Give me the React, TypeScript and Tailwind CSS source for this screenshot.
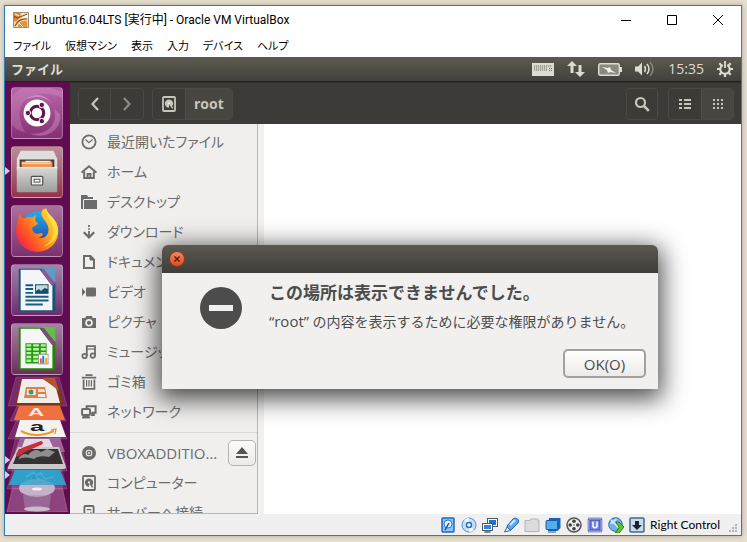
import type { ReactNode } from 'react';

const menus = ['ファイル', '仮想マシン', '表示', '入力', 'デバイス', 'ヘルプ'];

const svgProps = {
  width: 16,
  height: 16,
  viewBox: '0 0 16 16',
  fill: 'none',
  stroke: 'currentColor',
  strokeWidth: 1.8,
};

const DiskIcon = () => (
  <svg {...svgProps}>
    <rect x="2" y="1" width="12" height="14" rx="1" />
    <path d="M8 11.8A4.2 4.2 0 1 1 12.2 7.6C12.2 9 11.2 10.2 10.2 10.8L8 8z" fill="currentColor" stroke="none" />
    <circle cx="8" cy="7.4" r="1.1" fill="#f0efee" stroke="none" />
    <path d="M9 8.6l2.8 3.8" strokeWidth="1.5" />
  </svg>
);

const places: { label: string; icon: ReactNode }[] = [
  {
    label: '最近開いたファイル',
    icon: (
      <svg {...svgProps}>
        <circle cx="8" cy="8" r="6.6" />
        <path d="M4.5 5.5L7.8 8.6L11.5 5.5" strokeWidth="1.2" />
      </svg>
    ),
  },
  {
    label: 'ホーム',
    icon: (
      <svg {...svgProps} strokeWidth="2">
        <path d="M.6 8.6L8 2.2l7.4 6.4" />
        <path d="M3.2 7.5v6.4h9.6V7.5" />
        <path d="M6.6 14v-4h2.8v4" />
      </svg>
    ),
  },
  {
    label: 'デスクトップ',
    icon: (
      <svg {...svgProps} fill="currentColor" stroke="none">
        <path d="M0 1h6l1 2h5v2H3L2 6v9H0z" />
        <path d="M3 6h13v9H3z" />
      </svg>
    ),
  },
  {
    label: 'ダウンロード',
    icon: (
      <svg {...svgProps}>
        <path d="M8 1v2M8 4.2v1.6M8 7v6" />
        <path d="M2.8 8.2L8 13.4l5.2-5.2" strokeWidth="2.2" />
      </svg>
    ),
  },
  {
    label: 'ドキュメント',
    icon: (
      <svg {...svgProps} strokeWidth="2">
        <path d="M3 1.9h6.5L13 5.6v8.5H3z" />
        <path d="M9 2v4h4z" fill="currentColor" strokeWidth="1" />
      </svg>
    ),
  },
  {
    label: 'ビデオ',
    icon: (
      <svg {...svgProps} fill="currentColor" stroke="none">
        <path d="M1 4l3.5 4L1 12z" />
        <rect x="5" y="3.5" width="10" height="9" rx="1" />
      </svg>
    ),
  },
  {
    label: 'ピクチャ',
    icon: (
      <svg {...svgProps} fill="currentColor" stroke="none">
        <path d="M5 2h6l.6 2H15v10H1V4h3.4z" />
        <circle cx="8" cy="8.8" r="3.8" fill="#f0efee" />
        <circle cx="8" cy="8.8" r="2.1" />
      </svg>
    ),
  },
  {
    label: 'ミュージック',
    icon: (
      <svg {...svgProps}>
        <path d="M5.8 12V2.2h8.2v9.2" />
        <path d="M5.8 5H14" strokeWidth="1.2" />
        <circle cx="3.6" cy="12" r="2.2" />
        <circle cx="11.8" cy="11.6" r="2.2" />
      </svg>
    ),
  },
  {
    label: 'ゴミ箱',
    icon: (
      <svg {...svgProps}>
        <path d="M.8 3.6h14.4M4.5 1.2h7" />
        <path d="M2.6 5.4v9.4h10.8V5.4" />
        <path d="M5.6 6v6.5M8 6v6.5M10.4 6v6.5" strokeWidth="1.2" />
      </svg>
    ),
  },
  {
    label: 'ネットワーク',
    icon: (
      <svg {...svgProps} strokeWidth="2">
        <rect x="1" y="5" width="8" height="6" rx="1" />
        <path d="M5.6 4.5V2.3h9v6.5h-4.2" />
        <path d="M1 14h8l-2-3H3z" fill="currentColor" strokeWidth="0.8" />
        <path d="M10 12h4l-.6-3h-3z" fill="currentColor" stroke="none" />
      </svg>
    ),
  },
];

const devices: { label: string; icon: ReactNode; eject?: boolean }[] = [
  {
    label: 'VBOXADDITIO…',
    eject: true,
    icon: (
      <svg {...svgProps}>
        <circle cx="8" cy="8" r="7" fill="currentColor" stroke="none" />
        <circle cx="8" cy="8" r="2.8" stroke="#f0efee" strokeWidth="1.1" />
        <circle cx="8" cy="8" r="1" fill="#f0efee" stroke="none" />
      </svg>
    ),
  },
  { label: 'コンピューター', icon: <DiskIcon /> },
  {
    label: 'サーバーへ接続',
    icon: (
      <svg {...svgProps}>
        <rect x="3.4" y="1" width="9.2" height="14" rx="1" />
        <path d="M5.8 4.6h4.4M9.4 7.5h1.2" strokeWidth="1.4" />
      </svg>
    ),
  },
];

const launchers: { name: string; tile: string; running?: boolean; icon: ReactNode }[] = [
  {
    name: 'Ubuntu',
    tile: 'bg-linear-to-b from-[#b868a8] to-[#852f75]',
    icon: (
      <svg viewBox="0 0 52 52" className="size-full" fill="none">
        <path d="M8 30C6 10 28 0 52 10V4L40 0H10L0 8v30q3 6 14 8Q9 40 8 30z" fill="#d79acb" opacity=".3" />
        <path d="M44 22c4 16-8 28-26 25 18 8 34-4 32-20z" fill="#dba0d0" opacity=".4" />
        <path d="M14 12C26 2 42 8 46 26 44 12 30 5 14 12z" fill="#e6b8dd" opacity=".5" />
        <circle cx="26" cy="26" r="14" fill="#fff" />
        <circle cx="26" cy="26" r="7" stroke="#5c1650" strokeWidth="3.2" />
        <path d="M20 26h-5M29 20.800l3-5M29 31.200l3 5" stroke="#fff" strokeWidth="1.4" />
        <g fill="#5c1650" stroke="#fff" strokeWidth="1">
          <circle cx="16.5" cy="26" r="2.8" />
          <circle cx="31" cy="17.6" r="2.8" />
          <circle cx="31" cy="34.4" r="2.8" />
        </g>
      </svg>
    ),
  },
  {
    name: 'Files',
    tile: 'bg-linear-to-b from-[#b98d9b] to-[#92324b]',
    running: true,
    icon: (
      <svg viewBox="0 0 52 52" className="size-full">
        <defs>
          <linearGradient id="cabinet" x1="0" y1="0" x2="0" y2="1">
            <stop offset="0" stopColor="#d9d9d7" />
            <stop offset="1" stopColor="#9c9c9a" />
          </linearGradient>
        </defs>
        <path d="M9 4h34l4 8v12H5V12z" fill="#dededc" />
        <path d="M8 13h36v9H8z" fill="#4a3a30" />
        <path d="M10 15h32v6H10z" fill="#e8985a" />
        <path d="M10 17h30" stroke="#f7d6a8" strokeWidth="1.6" />
        <path d="M14 15h26" stroke="#f4ead8" strokeWidth="1.4" />
        <path d="M5 21h42v25q0 1-1 1H6q-1 0-1-1z" fill="url(#cabinet)" />
        <path d="M5 21.5h42" stroke="#f3f3f1" />
        <rect x="20" y="30.500" width="12" height="9" rx="1" fill="#eee" stroke="#4c4c4c" strokeWidth="1.2" />
        <rect x="23" y="33.500" width="6" height="3" fill="#fff" stroke="#4c4c4c" />
      </svg>
    ),
  },
  {
    name: 'Firefox',
    tile: 'bg-linear-to-b from-[#a9719d] to-[#7b3270]',
    icon: (
      <svg viewBox="0 0 52 52" className="size-full">
        <defs>
          <linearGradient id="fox" x1="1" y1="0" x2="0" y2="0.7">
            <stop offset="0" stopColor="#fff04a" />
            <stop offset=".4" stopColor="#ffb01f" />
            <stop offset=".75" stopColor="#ff5a22" />
            <stop offset="1" stopColor="#f0264c" />
          </linearGradient>
          <linearGradient id="globe" x1="0" y1="0" x2="0" y2="1">
            <stop offset="0" stopColor="#1aaef0" />
            <stop offset="1" stopColor="#273a9a" />
          </linearGradient>
        </defs>
        <circle cx="27" cy="24" r="18" fill="url(#globe)" />
        <path
          d="M9 8C9 12 11 13 13 13C16 11 19 11 21 12L25 9C24 13 23 15 27 18C27 20 22 21 21 23C21 28 25 30 30 28C34 28 32 32 27 33C36 35 40 27 37 20C34 13 29 12 31 5C33 3 35 2 36 3C36 8 42 10 46 17C51 28 47 40 37 45C26 51 11 46 6 35C3 27 4 20 6 17C6 13 7 10 9 8z"
          fill="url(#fox)"
        />
        <path d="M36 3c-1 8 6 12 7 20c1 10-4 16-10 19c10-2 16-11 14-21C45 12 37 9 36 3z" fill="#ffe34a" opacity=".8" />
      </svg>
    ),
  },
  {
    name: 'Writer',
    tile: 'bg-linear-to-b from-[#a283ac] to-[#6c2e6c]',
    icon: (
      <svg viewBox="0 0 52 52" className="size-full">
        <path d="M27 3h18v17z" fill="#5f9cc2" />
        <path d="M7 4h24l14 15v29H7z" fill="#135577" />
        <path d="M9 5h20l13 17v25H9z" fill="#f4f5f6" />
        <path d="M29 5l13 17 3-3L33 4z" fill="#8b5a94" />
        <path d="M14 21h8M14 25h8M14 29h8M14 33h24M14 37h24M14 41h18" stroke="#155e86" strokeWidth="2" />
        <rect x="24" y="20" width="14" height="10" fill="#1b4d68" />
        <path d="M25 21h12v4l-3-1-4 3-2-2-3 2z" fill="#bfdcea" />
        <circle cx="34" cy="22.500" r="1.500" fill="#f4cf4b" />
      </svg>
    ),
  },
  {
    name: 'Calc',
    tile: 'bg-linear-to-b from-[#a583a3] to-[#6c2e5c]',
    icon: (
      <svg viewBox="0 0 52 52" className="size-full">
        <path d="M27 3h18v17z" fill="#63bd49" />
        <path d="M7 4h24l14 15v29H7z" fill="#23810f" />
        <path d="M9 5h20l13 17v24H9z" fill="#f6f7f5" />
        <path d="M29 5l13 17 3-3L33 4z" fill="#7d4d78" />
        <path d="M14 20h22v21H14z" fill="#239a17" />
        <path
          d="M15 21h5v2.500h-5zM22 21h6v2.500h-6zM30 21h5v2.500h-5zM15 25h5v2.500h-5zM22 25h6v2.500h-6zM30 25h5v2.500h-5zM15 29h5v2.500h-5zM22 29h6v2.500h-6zM30 29h5v2.500h-5zM15 33h5v2.500h-5zM22 33h6v2.500h-6zM15 37h5v2.500h-5zM22 37h6v2.500h-6z"
          fill="#b9f59e"
        />
        <rect x="27.500" y="31.500" width="10" height="10" fill="#fff" stroke="#999" />
        <path d="M29 36h2v5h-2z" fill="#e8552b" />
        <path d="M31.500 33h2v8h-2z" fill="#2f77c8" />
        <path d="M34.500 35h2v6h-2z" fill="#f0a020" />
      </svg>
    ),
  },
];

// Icons that do not fit are folded into a slanted pile at the foot of the launcher.
const FoldedLaunchers = () => (
  <svg viewBox="0 0 65 137" className="w-full shrink-0" aria-hidden="true">
    <g fill="#d49ac6" fillOpacity=".22" stroke="#c68cba" strokeOpacity=".35" strokeWidth=".7">
      <path d="M11 2h43l8 29H3z" />
      <path d="M13 29h40l8 17H5z" />
      <path d="M12 44h42l8 20H3z" />
      <path d="M12 58h42l8 38H2z" />
      <path d="M11 84h43l8 30H2z" />
      <path d="M10 98h45l7 39H2z" />
      <path d="M8 113h49l6 24H2z" />
    </g>
    <path d="M16 4h27l13 11 2 15H10z" fill="#7f3715" />
    <path d="M17 4h21l13 9 4 15H12z" fill="#f1eee9" />
    <path d="M38 3l12 0 4 13z" fill="#b3552f" />
    <path d="M21 12h19l2 11H19z" fill="#e77a48" />
    <path d="M22 14h9l-.5 6h-9zM33 14h6l1 3h-7zM33 19h7l.5 3H33z" fill="#f7eadf" />
    <circle cx="26" cy="17" r="2.500" fill="#3f9b63" />
    <path d="M14 31h41l5 14H9z" fill="#ee7140" />
    <g transform="translate(31 41) scale(1.500 .75)">
      <text textAnchor="middle" fontSize="15" fontWeight="bold" fill="#fbe9e0" fontFamily="Liberation Sans, sans-serif">A</text>
    </g>
    <path d="M15 45h40l6 17H10z" fill="#f4f2f2" />
    <g transform="translate(32 56) scale(1.500 .75)">
      <text textAnchor="middle" fontSize="17" fontWeight="bold" fill="#222" fontFamily="Liberation Sans, sans-serif">a</text>
    </g>
    <path d="M16 56q15 8 33 0" fill="none" stroke="#f39a1e" strokeWidth="2" />
    <path d="M46 55l5-1-1 5" fill="none" stroke="#f39a1e" strokeWidth="1.300" />
    <path d="M15 63h40l5 14H10z" fill="#a878a6" opacity=".75" />
    <path d="M20 64h24l4 8H17z" fill="#f1ecf0" opacity=".85" />
    <path d="M13 72h41l7 20q0 2-2 2H4q-2 0-1-2z" fill="#cbc8ca" />
    <path d="M14 74h39l5 15H8z" fill="#333334" />
    <path d="M13 84q5-7 10-4q7-8 13-3l6-3 8 3-6 5q-10-2-15 2-8-3-16 0z" fill="#8e8e90" />
    <path d="M11 80q1-6 11-9l14-5q4 1 0 4l-14 6-10 6z" fill="#c72f3b" />
    <path d="M10 95h45l6 15H4z" fill="#329fc8" />
    <path d="M21 102l8-5 1 4 6-3 4 6 8-2M24 106l8-3 6 3" fill="none" stroke="#8bd7ef" strokeWidth="1.500" />
    <path d="M29 99l3 6-5-1z" fill="#1a7098" />
    <ellipse cx="32" cy="113" rx="18" ry="9" fill="#cfc6d6" opacity=".85" />
    <path d="M4 110L10 95h45l6 15z" fill="#329fc8" opacity=".75" />
    <ellipse cx="32" cy="114" rx="5" ry="1.500" fill="#f1ecf3" />
    <path d="M18 120h28l-2 14H20z" fill="#a68eaf" opacity=".5" />
    <ellipse cx="32" cy="134" rx="13" ry="2.500" fill="#c9bccc" />
    <path d="M0 81l5 4-5 4zM0 96l5 4-5 4z" fill="#e2c8e4" />
  </svg>
);

const blue = '#1769c4';

const statusIcons: { name: string; icon: ReactNode }[] = [
  {
    name: 'ハードディスク',
    icon: (
      <>
        <rect x="2" y="1" width="12" height="14" rx="1" fill="#8cc3f2" stroke={blue} strokeWidth="1.500" />
        <circle cx="8" cy="7" r="4" fill="#e9f6ff" stroke="#2b79c9" />
        <path d="M9 6l-4 7" stroke="#12509c" strokeWidth="1.500" />
      </>
    ),
  },
  {
    name: '光学ドライブ',
    icon: (
      <>
        <circle cx="8" cy="8" r="7" fill="#c6e0f8" stroke="#4f8cc9" />
        <path d="M8 8L3 3a7 7 0 0 1 5-2zM8 8l5 5a7 7 0 0 1-5 2z" fill="#f2faff" />
        <circle cx="8" cy="8" r="2.500" fill="#fff" stroke="#2370c0" strokeWidth="1.500" />
      </>
    ),
  },
  {
    name: 'ネットワークアダプター',
    icon: (
      <>
        <rect x="5.500" y="1.500" width="10" height="8" fill="#fff" stroke="#4c5968" />
        <path d="M7 3h7v5H7z" fill="#1f6fd0" />
        <rect x=".5" y="6.500" width="10" height="7" fill="#fff" stroke="#4c5968" />
        <path d="M2 8h7v4H2z" fill="#2f86e0" />
        <path d="M2.500 15h6" stroke="#596270" strokeWidth="1.500" />
      </>
    ),
  },
  {
    name: 'USB',
    icon: (
      <>
        <path d="M4 9l6-7q2-2 4.500 0t.5 4l-7 7q-3 1-4-4z" fill="#5aa8ee" stroke="#2565ad" />
        <path d="M4 10l3.500 3.500L1.500 15z" fill="#dbeafa" stroke="#406a98" />
        <path d="M7 8l5-5" stroke="#d3ebff" strokeWidth="2" />
      </>
    ),
  },
  {
    name: '共有フォルダー',
    icon: <path d="M1 14.500v-11h5l1-1.500h7v1.500h1v11z" fill="#dcdcdc" stroke="#b5b5b5" />,
  },
  {
    name: 'ディスプレイ',
    icon: (
      <>
        <path d="M4 1h11.500v10l-3 3H3z" fill="#1764b7" />
        <rect x="1" y="3.500" width="11.500" height="9" rx="1" fill="#54abef" stroke="#1c5ba4" />
        <path d="M3 15h8" stroke="#7c8896" strokeWidth="1.500" />
      </>
    ),
  },
  {
    name: 'ビデオキャプチャ',
    icon: (
      <>
        <circle cx="8" cy="8" r="7" fill="#eee" stroke="#555" strokeWidth="1.500" />
        <g fill="#3f3f3f">
          <circle cx="8" cy="4.200" r="1.800" />
          <circle cx="8" cy="11.800" r="1.800" />
          <circle cx="4.200" cy="8" r="1.800" />
          <circle cx="11.800" cy="8" r="1.800" />
          <circle cx="8" cy="8" r=".7" />
        </g>
      </>
    ),
  },
  {
    name: '仮想化支援機能',
    icon: (
      <>
        <rect x="1.500" y="1.500" width="13" height="13" fill="none" stroke="#3842ae" strokeWidth="2" strokeDasharray="1 1" />
        <rect x="3" y="3" width="10" height="10" fill="#7187e8" stroke="#3444b4" />
        <path d="M6 4.500v5q2 2.500 4 0v-5" fill="none" stroke="#fff" strokeWidth="1.500" />
      </>
    ),
  },
  {
    name: 'マウス統合',
    icon: (
      <>
        <circle cx="7.500" cy="7.500" r="6.800" fill="#6eb2ea" stroke="#2d6fae" />
        <path d="M3 3l8 8M2.500 7l6-5" stroke="#e3f3ff" strokeWidth="1.500" />
        <path d="M8 5h3l5 5-5 6H7l4-5.500z" fill="#62c32f" stroke="#2f7d18" />
      </>
    ),
  },
  {
    name: 'キーボード',
    icon: (
      <>
        <rect x="1" y="1" width="14" height="14" rx="1" fill="#c9dcec" stroke="#41678b" strokeWidth="1.500" />
        <path d="M6 4h4v4h3l-5 5-5-5h3z" fill="#1d2229" />
      </>
    ),
  },
];

function TitleBar() {
  return (
    <header className="flex h-7 shrink-0 items-center bg-white pl-2 text-black">
      <svg width="16" height="16" viewBox="0 0 16 16">
        <rect width="16" height="16" fill="#f3d8ad" />
        <path d="M0 0h8l-1 5-3 4-4 1z" fill="#e08a35" />
        <path d="M9 1h6v5l-6 3z" fill="#fbf2de" />
        <path d="M1 4q3 3 6 1l7-3M2 14Q6 6 14 7" fill="none" stroke="#8d4b22" strokeWidth="1.200" />
        <path d="M5 14q2-6 9-5v6H5z" fill="#ea9333" />
        <path d="M2 2l4 2M6 11l4 4" stroke="#fff" />
        <path d="M.5.5h15v15H.5z" fill="none" stroke="#a38d72" />
      </svg>
      <h1 className="min-w-0 flex-1 truncate pl-[5px] font-['Roboto','Noto_Sans_CJK_JP',sans-serif] text-[12px] leading-5">
        Ubuntu16.04LTS [実行中] - Oracle VM VirtualBox
      </h1>
      {[
        { label: '最小化', d: 'M0 5.5h10' },
        { label: '最大化', d: 'M.5.5h9v9h-9z' },
        { label: '閉じる', d: 'M0 0l10 10M10 0L0 10' },
      ].map((b) => (
        <button key={b.label} aria-label={b.label} className="flex h-7 w-[46px] items-center justify-center">
          <svg width="10" height="10" viewBox="0 0 10 10" fill="none" stroke="#000">
            <path d={b.d} />
          </svg>
        </button>
      ))}
    </header>
  );
}

function TopPanel() {
  return (
    <div className="flex h-[25px] shrink-0 items-center border-b border-[#23221f] bg-linear-to-b from-[#5c5a50] to-[#42413c] pr-2 pl-1.5 text-[#dfdbd2]">
      <span className="flex-1 text-[13px] leading-5 font-semibold">ファイル</span>
      <div className="flex items-center gap-[13px]">
        <svg width="22" height="13" viewBox="0 0 22 13">
          <rect width="22" height="13" fill="#dfdbd2" />
          <path d="M2 3h18M2 5h13M2 7h13M17 5.500h3M17 7.500h3" stroke="#6b6961" strokeWidth="1.200" strokeDasharray="1.200 .8" />
        </svg>
        <svg width="18" height="16" viewBox="0 0 18 16" fill="#dfdbd2">
          <path d="M5 0l5 5H6.500v7h-3V5H0z" />
          <path d="M13 16l-5-5h3.500V4h3v7H18z" />
        </svg>
        <svg width="24" height="13" viewBox="0 0 24 13">
          <rect x=".7" y=".7" width="20.600" height="11.600" rx="1.500" fill="#8b8980" stroke="#dfdbd2" strokeWidth="1.400" />
          <path d="M22 4h2v5h-2z" fill="#dfdbd2" />
          <path d="M4 4l6 1 2-1 1 3 5 3-6-1-2 1-1-3z" fill="#f3f0e9" />
        </svg>
        <svg width="20" height="16" viewBox="0 0 20 16" fill="none" stroke="#dfdbd2" strokeWidth="1.500">
          <path d="M0 5.500h3l4-4v13l-4-4H0z" fill="#dfdbd2" stroke="none" />
          <path d="M9.500 5q2 3 0 6" />
          <path d="M12 3q4 5 0 10" />
          <path d="M15 1q6 7 0 14" opacity=".4" />
        </svg>
        <time className="text-[14px] leading-5">15:35</time>
        <svg width="16" height="16" viewBox="0 0 16 16" fill="none" stroke="#dfdbd2">
          <path d="M5.800 4A4.700 4.700 0 1 0 10.200 4" strokeWidth="2" />
          <path d="M8 0v7" strokeWidth="1.800" />
          <path d="M0 8h3M13 8h3M2.300 2.300l2 2M13.700 2.300l-2 2M2.300 13.700l2-2M13.700 13.700l-2-2M8 13v3" strokeWidth="2.200" />
        </svg>
      </div>
    </div>
  );
}

function Launcher() {
  return (
    <nav aria-label="ランチャー" className="flex w-[65px] shrink-0 flex-col overflow-hidden bg-[#5f0c50] pt-[5px]">
      <ul className="flex flex-col gap-[7px] px-1.5">
        {launchers.map((l) => (
          <li key={l.name} className="relative">
            {l.running && (
              <svg className="absolute top-[21px] -left-1.5" width="5" height="8" viewBox="0 0 5 8">
                <path d="M0 0l5 4-5 4z" fill="#e2c8e4" />
              </svg>
            )}
            <button
              aria-label={l.name}
              className={`block size-[52px] overflow-hidden rounded-sm border border-white/25 ${l.tile}`}
            >
              {l.icon}
            </button>
          </li>
        ))}
      </ul>
      <FoldedLaunchers />
    </nav>
  );
}

function Toolbar() {
  const group = 'flex h-8 rounded-sm border border-[#4a4943]';
  return (
    <div className="flex h-[42px] shrink-0 items-center border-t border-[#2f2e2b] bg-[#3c3b37] pr-[7px] pl-2 text-[#c9c5bb]">
      <div className={group}>
        <button aria-label="戻る" className="flex w-8 items-center justify-center border-r border-[#4a4943]">
          <svg width="8" height="14" viewBox="0 0 8 14" fill="none" stroke="currentColor" strokeWidth="2.200">
            <path d="M7 1L1.500 7L7 13" />
          </svg>
        </button>
        <button aria-label="進む" className="flex w-8 items-center justify-center text-[#8e8b83]">
          <svg width="8" height="14" viewBox="0 0 8 14" fill="none" stroke="currentColor" strokeWidth="2.200">
            <path d="M1 1l5.500 6L1 13" />
          </svg>
        </button>
      </div>
      <div className={`ml-2 ${group}`}>
        <button aria-label="コンピューター" className="flex w-8 items-center justify-center">
          <DiskIcon />
        </button>
        <button className="border-l border-[#504f49] bg-[#474640] px-2 text-[14px] leading-5 font-bold">root</button>
      </div>
      <div className="flex-1" />
      <div className={group}>
        <button aria-label="検索" className="flex w-[30px] items-center justify-center">
          <svg {...svgProps} strokeWidth="2.200">
            <circle cx="6.500" cy="6.500" r="4.500" />
            <path d="M10 10l4.800 4.800" strokeWidth="2.600" />
          </svg>
        </button>
      </div>
      <div className={`ml-2.5 ${group}`}>
        <button aria-label="一覧表示" className="flex w-8 items-center justify-center">
          <svg width="12" height="10" viewBox="0 0 12 10" fill="currentColor">
            <path d="M0 0h3v2H0zM5 0h7v2H5zM0 4h3v2H0zM5 4h7v2H5zM0 8h3v2H0zM5 8h7v2H5z" />
          </svg>
        </button>
        <button aria-label="アイコン表示" className="flex w-8 items-center justify-center border-l border-[#504f49] bg-[#474640]">
          <svg width="10" height="10" viewBox="0 0 10 10" fill="currentColor">
            <path d="M0 0h2v2H0zM4 0h2v2H4zM8 0h2v2H8zM0 4h2v2H0zM4 4h2v2H4zM8 4h2v2H8zM0 8h2v2H0zM4 8h2v2H4zM8 8h2v2H8z" />
          </svg>
        </button>
      </div>
    </div>
  );
}

function Sidebar() {
  const row = 'flex h-[30px] items-center gap-2.5 pl-[11px]';
  return (
    <aside className="w-[188px] shrink-0 overflow-hidden border-r border-b border-[#b9b7b5] bg-[#f0efee] pt-[3px] text-[14px] leading-5 text-[#6b6b6b] [font-feature-settings:'palt']">
      <ul>
        {places.map((p) => (
          <li key={p.label}>
            <a href="#" className={row}>
              {p.icon}
              <span className="whitespace-nowrap">{p.label}</span>
            </a>
          </li>
        ))}
      </ul>
      <hr className="my-[5px] border-[#dcdad8]" />
      <ul>
        {devices.map((d) => (
          <li key={d.label} className="flex items-center pr-px">
            <a href="#" className={`flex-1 ${row}`}>
              {d.icon}
              <span className={d.eject ? 'text-[15px] whitespace-nowrap' : 'whitespace-nowrap'}>{d.label}</span>
            </a>
            {d.eject && (
              <button
                aria-label="取り出す"
                className="flex h-[26px] w-7 shrink-0 items-center justify-center rounded-[5px] border border-[#b5b3b0] bg-linear-to-b from-[#fafafa] to-[#eceae8]"
              >
                <svg width="12" height="12" viewBox="0 0 12 12" fill="#555">
                  <path d="M6 0l6 7H0zM0 9h12v2H0z" />
                </svg>
              </button>
            )}
          </li>
        ))}
      </ul>
    </aside>
  );
}

function ErrorDialog() {
  return (
    <div
      role="alertdialog"
      aria-labelledby="error-title"
      aria-describedby="error-text"
      className="absolute top-[163px] left-[92px] w-[496px] rounded-t-md bg-[#f1f0ef] text-[#4c4c4c] shadow-[0_6px_24px_4px_rgba(0,0,0,0.7)]"
    >
      <div className="flex h-7 items-center rounded-t-md bg-linear-to-b from-[#5a584f] to-[#3e3d39] px-[7px]">
        <button
          aria-label="閉じる"
          className="flex size-4 items-center justify-center rounded-full border border-[#8c3a1e] bg-linear-to-b from-[#f58560] to-[#dd4b1c]"
        >
          <svg width="6" height="6" viewBox="0 0 6 6" stroke="#4a1d0e" strokeWidth="1.300">
            <path d="M.5.5l5 5M5.500.5l-5 5" />
          </svg>
        </button>
      </div>
      <div className="flex gap-[27px] pt-2 pl-[38px]">
        <svg className="mt-1.5 shrink-0" width="42" height="42" viewBox="0 0 42 42">
          <circle cx="21" cy="21" r="21" fill="#4c4c4c" />
          <path d="M9 18h24v6H9z" fill="#f1f0ef" />
        </svg>
        <div>
          <h2 id="error-title" className="text-[17px] leading-6 font-bold">
            この場所は表示できませんでした。
          </h2>
          <p id="error-text" className="mt-1 text-[14px] leading-6 whitespace-nowrap">
            <span className="text-[15px]">“root”</span> の内容を表示するために必要な権限がありません。
          </p>
        </div>
      </div>
      <div className="flex justify-end px-3 pt-[15px] pb-[11px]">
        <button className="h-[29px] w-[83px] rounded-[5px] border-2 border-[#a3a19f] bg-linear-to-b from-white to-[#eceae9] text-[15px] leading-5">
          OK(O)
        </button>
      </div>
    </div>
  );
}

function StatusBar() {
  return (
    <footer className="flex h-[21px] shrink-0 items-center justify-end gap-[5px] bg-[#f0f0f0] pr-0.5">
      {statusIcons.map((s) => (
        <svg key={s.name} width="16" height="16" viewBox="0 0 16 16" fill="none" role="img" aria-label={s.name}>
          {s.icon}
        </svg>
      ))}
      <span className="font-['Lato',sans-serif] text-[12px] leading-5 text-black">Right Control</span>
      <svg className="ml-1 self-end" width="10" height="12" viewBox="0 0 10 12" fill="#b5b5b5">
        <path d="M6 1h2v2H6zM3 4h2v2H3zM6 4h2v2H6zM0 7h2v2H0zM3 7h2v2H3zM6 7h2v2H6z" />
      </svg>
    </footer>
  );
}

export default function App() {
  return (
    <div className="flex h-screen min-h-[300px] bg-[#e6dfd0] pt-[5px] pr-[5px] pb-1.5 pl-1 font-['Open_Sans','Noto_Sans_CJK_JP',sans-serif]">
      <div className="flex min-w-0 flex-1 flex-col border border-[#2b7cb8] bg-white shadow-[0_0_5px_rgba(90,80,60,0.4)]">
        <TitleBar />
        <nav className="flex h-[23px] shrink-0 items-center gap-3.5 bg-white pl-2 text-[11px] leading-5 text-black [font-feature-settings:'palt']">
          {menus.map((m) => (
            <button key={m}>{m}</button>
          ))}
        </nav>
        <TopPanel />
        <div className="flex min-h-0 flex-1">
          <Launcher />
          <div className="relative flex min-w-0 flex-1 flex-col overflow-hidden">
            <Toolbar />
            <div className="flex min-h-0 flex-1">
              <Sidebar />
              <div className="w-1.5 shrink-0 bg-[#f2f1f0]" />
              <main className="flex-1 bg-white" />
            </div>
            <ErrorDialog />
          </div>
        </div>
        <StatusBar />
      </div>
    </div>
  );
}
